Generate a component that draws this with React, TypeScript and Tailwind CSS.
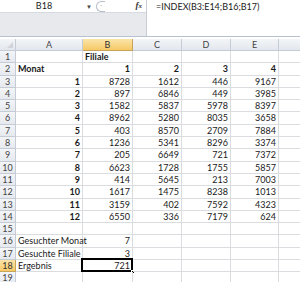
import React from "react";

const cols = [
  { l: "A", w: 67 },
  { l: "B", w: 50 },
  { l: "C", w: 49 },
  { l: "D", w: 49 },
  { l: "E", w: 48 },
  { l: "", w: 30 },
];

type Cell = { t: string; b?: boolean; left?: boolean };
const rows: Cell[][] = [
  [{ t: "" }, { t: "Filiale", b: true, left: true }, { t: "" }, { t: "" }, { t: "" }],
  [{ t: "Monat", b: true, left: true }, { t: "1", b: true }, { t: "2", b: true }, { t: "3", b: true }, { t: "4", b: true }],
  ...[
    [1, 8728, 1612, 446, 9167],
    [2, 897, 6846, 449, 3985],
    [3, 1582, 5837, 5978, 8397],
    [4, 8962, 5280, 8035, 3658],
    [5, 403, 8570, 2709, 7884],
    [6, 1236, 5341, 8296, 3374],
    [7, 205, 6649, 721, 7372],
    [8, 6623, 1728, 1755, 5857],
    [9, 414, 5645, 213, 7003],
    [10, 1617, 1475, 8238, 1013],
    [11, 3159, 402, 7592, 4323],
    [12, 6550, 336, 7179, 624],
  ].map((r) => r.map((v, i) => ({ t: String(v), b: i === 0 }))),
  [],
  [{ t: "Gesuchter Monat", left: true }, { t: "7" }],
  [{ t: "Gesuchte Filiale", left: true }, { t: "3" }],
  [{ t: "Ergebnis", left: true }, { t: "721" }],
  [],
];

export default function App() {
  return (
    <div
      className="w-[300px] h-[282px] overflow-hidden bg-white relative text-[#1a1a1a]"
      style={{ fontFamily: "Lato, 'Liberation Sans', sans-serif" }}
    >
      {/* formula bar */}
      <div className="flex h-[37px] border-b border-[#b8c2cf]">
        <div className="w-[147px] flex flex-col border-r border-[#c6ccd4]">
          <div className="h-[13px] bg-white flex items-center text-[9px] border-b border-[#d6dbe2]">
            <div className="w-[86px] text-center pl-[2px]">B18</div>
            <div className="text-[6px] text-[#444] w-[8px]">▼</div>
            <div className="ml-[2px] w-[9px] h-[11px] rounded-l-full border-l border-t border-b border-[#b7bec7] flex items-center justify-center text-[6px] text-[#999]">
              ⁼
            </div>
            <div className="flex-1" />
            <div
              className="mr-[4px] text-[9px] italic font-bold text-[#333]"
              style={{ fontFamily: "'Liberation Serif', serif" }}
            >
              f<span className="text-[7px]">x</span>
            </div>
          </div>
          <div className="flex-1 bg-[#e7e9ed]" />
        </div>
        <div className="flex-1 bg-white pl-[9px] pt-[1px] text-[9px] leading-[12px]">
          =INDEX(B3:E14;B16;B17)
        </div>
      </div>
      <div className="h-[2px] bg-white" />
      {/* column headers */}
      <div className="flex h-[12px]">
        <div className="w-[16px] shrink-0 border-r border-b border-[#c5ccd6] bg-gradient-to-b from-[#f3f5f8] to-[#e3e7ed] relative">
          <div
            className="absolute right-[2px] bottom-[2px] w-0 h-0"
            style={{ borderLeft: "6px solid transparent", borderBottom: "6px solid #d0d4da" }}
          />
        </div>
        {cols.map((c, i) => (
          <div
            key={i}
            style={{ width: c.w }}
            className={`shrink-0 border-r border-b text-[9px] leading-[11px] text-center ${
              c.l === "B"
                ? "bg-gradient-to-b from-[#fbe4a8] to-[#f6c964] border-[#c8a45a] text-[#333]"
                : "bg-gradient-to-b from-[#f3f5f8] to-[#e3e7ed] border-[#c5ccd6] text-[#444]"
            }`}
          >
            {c.l}
          </div>
        ))}
      </div>
      {/* rows */}
      {rows.map((r, ri) => (
        <div key={ri} className="flex h-[12.3px]">
          <div
            className={`w-[16px] shrink-0 border-r border-b text-[9px] leading-[11px] text-center ${
              ri === 17
                ? "bg-gradient-to-b from-[#fbe4a8] to-[#f6c964] border-[#c8a45a] text-[#333]"
                : "bg-gradient-to-b from-[#f3f5f8] to-[#e6e9ee] border-[#c5ccd6] text-[#444]"
            }`}
          >
            {ri + 1}
          </div>
          {cols.map((c, ci) => {
            const cell = r[ci];
            const sel = ri === 17 && ci === 1;
            return (
              <div
                key={ci}
                style={{ width: c.w }}
                className={`shrink-0 border-r border-b border-[#dadcdf] text-[9px] leading-[11px] px-[2px] whitespace-nowrap relative ${
                  cell?.left ? "text-left" : "text-right"
                } ${cell?.b ? "font-bold" : ""}`}
              >
                {cell?.t}
                {sel && (
                  <>
                    <div className="absolute left-[-2px] top-[-2px] right-[-1px] bottom-[-1px] border-2 border-black" />
                    <div className="absolute right-[-3px] bottom-[-3px] w-[4px] h-[4px] bg-black border border-white" />
                  </>
                )}
              </div>
            );
          })}
        </div>
      ))}
    </div>
  );
}
